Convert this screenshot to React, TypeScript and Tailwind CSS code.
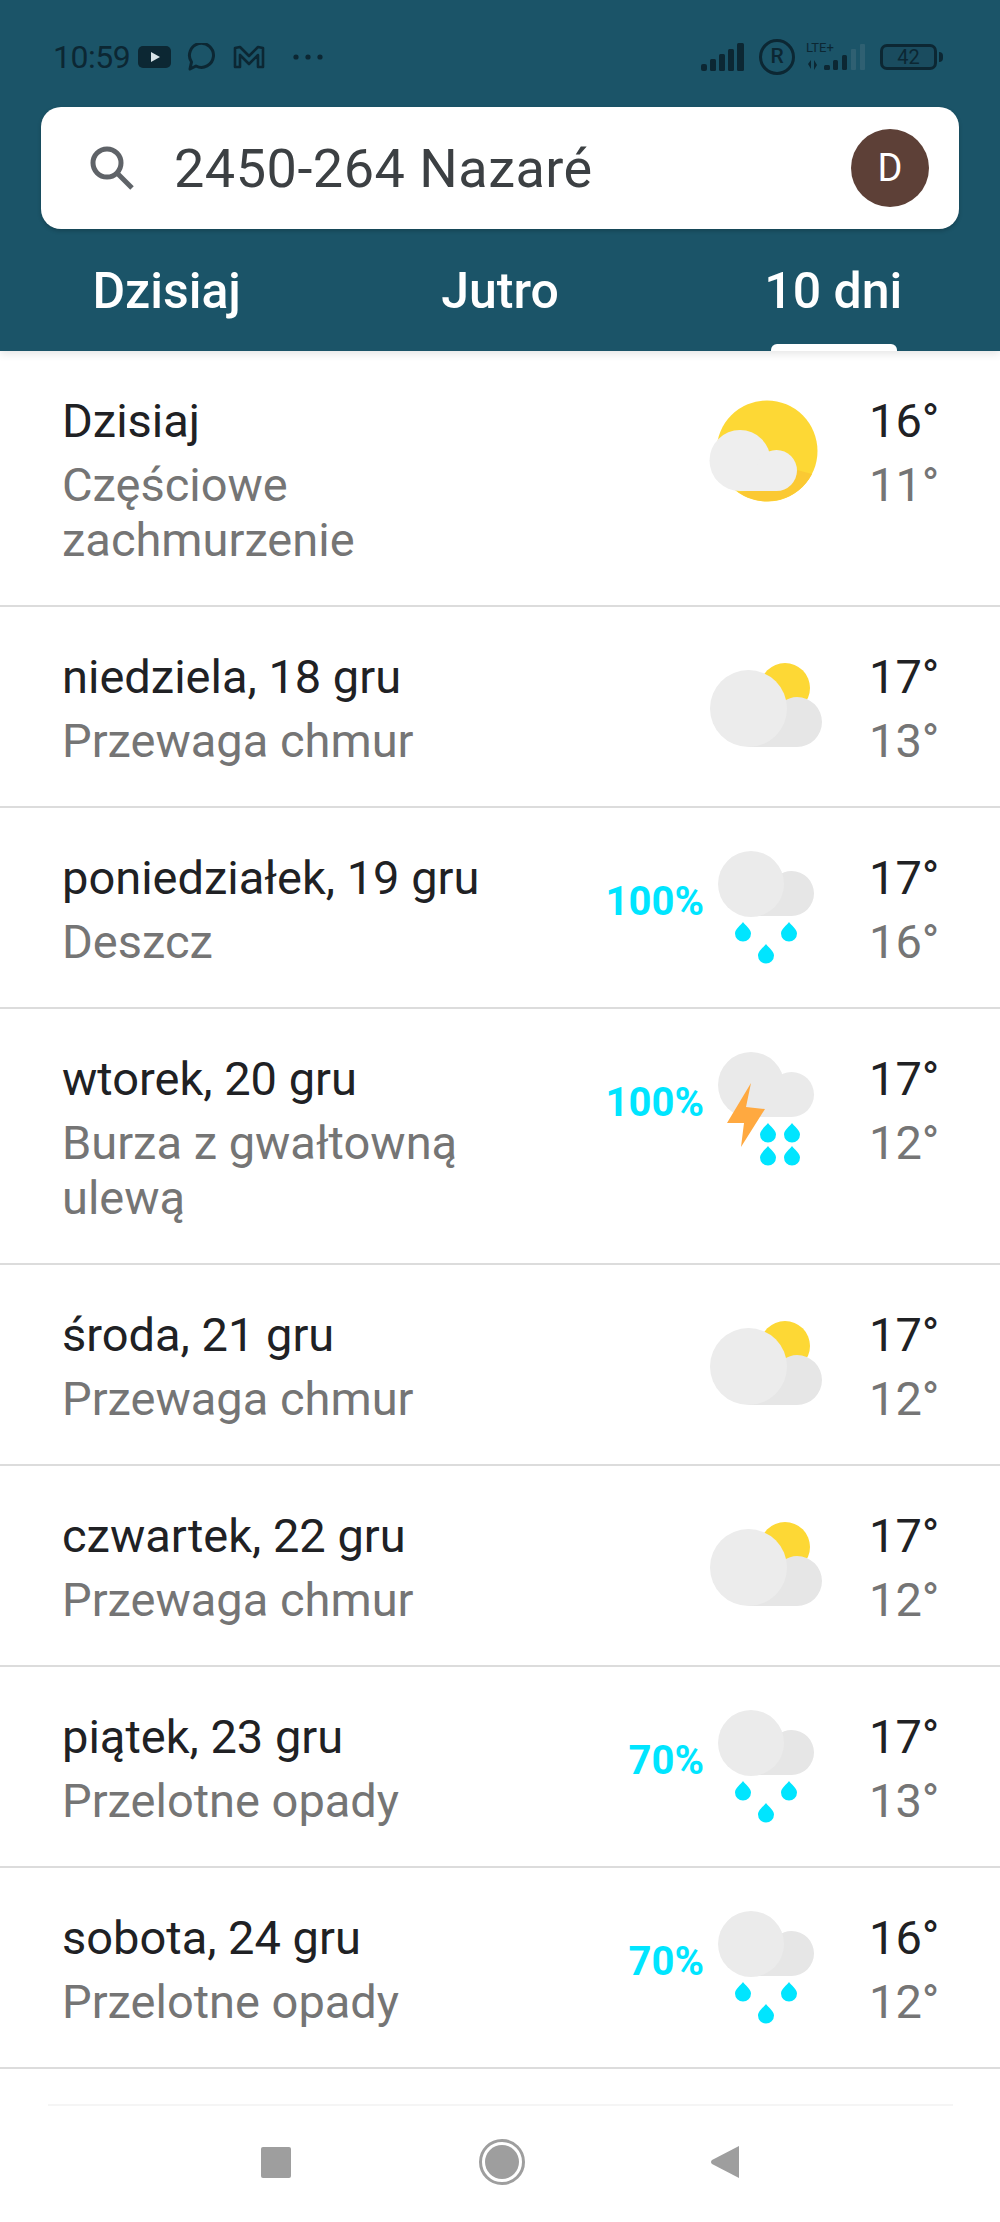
import React from "react";

const DROP = "M0 -9 C2 -6 8 -2 8 2.5 A8 8 0 0 1 -8 2.5 C-8 -2 -2 -6 0 -9 Z";
const Drop = ({ x, y }: { x: number; y: number }) => <path d={DROP} transform={`translate(${x} ${y})`} fill="#00E5FF" />;

function Icon({ type }: { type: "partly" | "mostly" | "rain" | "storm" }) {
  return (
    <svg width="130" height="122" viewBox="0 0 130 122" className="shrink-0">
      {type === "partly" && (
        <>
          <circle cx="67" cy="65" r="50.5" fill="#FDD835" />
          <path d="M48 105 L97 84 L112 88 A50.5 50.5 0 0 1 38 106 Z" fill="#FBC933" />
          <g fill="#EEEEEE">
            <circle cx="40" cy="74.5" r="30.5" />
            <circle cx="76.5" cy="84.5" r="20.5" />
            <rect x="40" y="80" width="37" height="25" />
          </g>
        </>
      )}
      {type === "mostly" && (
        <>
          <circle cx="85" cy="46" r="25" fill="#FDD835" />
          <path d="M48 105 L97 105 A25 25 0 0 0 97 55 A25 25 0 0 0 75 70 Z" fill="#E6E6E6" />
          <circle cx="48.5" cy="66.5" r="38.5" fill="#ECECEC" />
        </>
      )}
      {type === "rain" && (
        <>
          <path d="M51 73 L91.5 73 A22.5 22.5 0 0 0 91.5 28 A22.5 22.5 0 0 0 70 45 Z" fill="#E6E6E6" />
          <circle cx="51" cy="41" r="33" fill="#EBEBEB" />
          <Drop x={43} y={88} />
          <Drop x={89} y={88} />
          <Drop x={66} y={110} />
        </>
      )}
      {type === "storm" && (
        <>
          <g fill="#EAEAEA">
            <circle cx="51" cy="41" r="33" />
            <circle cx="91.5" cy="50.5" r="22.5" />
            <rect x="51" y="45" width="41" height="28" />
          </g>
          <polygon points="51,39 46,63 65,65 41,103 44,79 27,79" fill="#FFA940" />
          <Drop x={68} y={88} />
          <Drop x={92} y={88} />
          <Drop x={68} y={111} />
          <Drop x={92} y={111} />
        </>
      )}
    </svg>
  );
}

type Day = {
  name: string;
  sub: React.ReactNode;
  pct?: string;
  icon: "partly" | "mostly" | "rain" | "storm";
  hi: string;
  lo: string;
};

const days: Day[] = [
  { name: "Dzisiaj", sub: "Częściowe zachmurzenie", icon: "partly", hi: "16°", lo: "11°" },
  { name: "niedziela, 18 gru", sub: "Przewaga chmur", icon: "mostly", hi: "17°", lo: "13°" },
  { name: "poniedziałek, 19 gru", sub: "Deszcz", pct: "100%", icon: "rain", hi: "17°", lo: "16°" },
  { name: "wtorek, 20 gru", sub: "Burza z gwałtowną ulewą", pct: "100%", icon: "storm", hi: "17°", lo: "12°" },
  { name: "środa, 21 gru", sub: "Przewaga chmur", icon: "mostly", hi: "17°", lo: "12°" },
  { name: "czwartek, 22 gru", sub: "Przewaga chmur", icon: "mostly", hi: "17°", lo: "12°" },
  { name: "piątek, 23 gru", sub: "Przelotne opady", pct: "70%", icon: "rain", hi: "17°", lo: "13°" },
  { name: "sobota, 24 gru", sub: "Przelotne opady", pct: "70%", icon: "rain", hi: "16°", lo: "12°" },
];

function StatusBar() {
  return (
    <div className="flex h-[107px] items-center justify-between pl-[53px] pr-[57px] pt-[6px] text-[#0c2733]">
      <div className="flex items-center">
        <span className="text-[32px] leading-none tracking-[-0.5px]">10:59</span>
        <svg width="34" height="22" viewBox="0 0 34 22" className="ml-[8px]">
          <rect width="33" height="22" rx="5" fill="#0c2733" />
          <polygon points="13,6 22,11 13,16" fill="#d7e3e8" />
        </svg>
        <svg width="30" height="28" viewBox="0 0 30 28" fill="none" className="ml-[15px]">
          <path d="M3 26 L4.5 19 A12 12 0 1 1 9 23 Z" stroke="#0c2733" strokeWidth="3" strokeLinejoin="round" />
        </svg>
        <svg width="32" height="24" viewBox="0 0 32 24" fill="none" className="ml-[16px]">
          <path d="M2 22 V3 L7 2 L16 11 L25 2 L30 3 V22 H25 V10 L16 19 L7 10 V22 Z" stroke="#0c2733" strokeWidth="2.6" strokeLinejoin="round" />
        </svg>
        <svg width="30" height="6" viewBox="0 0 30 6" className="ml-[28px]">
          <circle cx="3" cy="3" r="2.6" fill="#0c2733" />
          <circle cx="15" cy="3" r="2.6" fill="#0c2733" />
          <circle cx="27" cy="3" r="2.6" fill="#0c2733" />
        </svg>
      </div>
      <div className="flex items-center">
        <svg width="44" height="28" viewBox="0 0 44 28">
          <rect x="0" y="21" width="6" height="7" rx="2" fill="#0c2733" />
          <rect x="9" y="16" width="6" height="12" rx="1.5" fill="#0c2733" />
          <rect x="18" y="11" width="6" height="17" rx="1.5" fill="#0c2733" />
          <rect x="27" y="6" width="6" height="22" rx="1.5" fill="#0c2733" />
          <rect x="36" y="0" width="7" height="28" rx="1.5" fill="#0c2733" />
        </svg>
        <div className="ml-[14px] flex h-[36px] w-[36px] shrink-0 items-center justify-center rounded-full border-[3px] border-[#0c2733] text-[21px] font-medium leading-none">R</div>
        <div className="relative ml-[11px] h-[30px] w-[63px]">
          <span className="absolute left-0 top-[-1px] text-[13px] leading-none">LTE+</span>
          <svg width="63" height="30" viewBox="0 0 63 30" className="absolute left-0 top-0">
            <path d="M2 22 L5 18 V27 Z M8 28 V18 L11 23 Z" fill="#0c2733" />
            <rect x="18" y="23" width="6" height="5" rx="1.5" fill="#0c2733" />
            <rect x="27" y="18" width="5" height="10" rx="1.5" fill="#0c2733" />
            <rect x="36" y="13" width="5" height="15" rx="1.5" fill="#0c2733" />
            <rect x="45" y="7" width="5" height="21" rx="1" fill="#2f6072" />
            <rect x="54" y="2" width="5" height="26" rx="1" fill="#2f6072" />
          </svg>
        </div>
        <div className="ml-[11px] flex h-[26px] w-[57px] items-center justify-center rounded-[7px] border-[3px] border-[#0c2733] bg-[#1a4c5f] text-[20px] leading-none">42</div>
        <div className="ml-[2px] h-[10px] w-[4px] rounded-r-sm bg-[#0c2733]" />
      </div>
    </div>
  );
}

export default function App() {
  return (
    <div className="flex h-[2222px] w-[1000px] flex-col overflow-hidden bg-white font-['Roboto',sans-serif]">
      <header className="relative z-10 h-[351px] shrink-0 bg-[#1b5468] shadow-[0_3px_8px_rgba(0,0,0,0.1)]">
        <StatusBar />
        <div className="mx-[41px] flex h-[122px] items-center rounded-[20px] bg-white pl-[48px] pr-[30px] shadow-[0_2px_4px_rgba(0,0,0,0.2)]">
          <svg width="46" height="46" viewBox="0 0 46 46" fill="none" className="shrink-0">
            <circle cx="18" cy="18" r="14" stroke="#5f6368" strokeWidth="5" />
            <path d="M28 28 L43 43" stroke="#5f6368" strokeWidth="5" />
          </svg>
          <span className="ml-[39px] flex-1 pt-[2px] text-[54px] leading-none tracking-[0.5px] text-[#3c4043]">2450-264 Nazaré</span>
          <div className="flex h-[78px] w-[78px] items-center justify-center rounded-full bg-[#5d4037] text-[38px] text-white">D</div>
        </div>
        <nav className="grid h-[122px] grid-cols-3 pt-[2px] text-center text-[50px] font-medium text-white">
          <div className="relative flex items-center justify-center">Dzisiaj</div>
          <div className="relative flex items-center justify-center">Jutro</div>
          <div className="relative flex items-center justify-center">
            10 dni
            <span className="absolute bottom-0 left-[104px] h-[7px] w-[126px] rounded-t-[6px] bg-white" />
          </div>
        </nav>
      </header>

      <main className="flex-1">
        {days.map((d) => (
          <div key={d.name} className="flex border-b-2 border-[#dcdcdc] pb-[38px] pl-[62px] pr-[62px]">
            <div className="min-w-0 flex-1 pt-[42px]">
              <div className="text-[47px] leading-[56px] text-[#202124]">{d.name}</div>
              <div className="mt-[8px] max-w-[470px] text-[47px] leading-[55px] text-[#757575]">{d.sub}</div>
            </div>
            {d.pct && <div className="-mr-[4px] pt-[66px] text-[40px] font-bold leading-[56px] text-[#00e5ff]">{d.pct}</div>}
            <div className="pt-[35px]">
              <Icon type={d.icon} />
            </div>
            <div className="ml-[39px] w-[69px] pt-[42px] text-[47px]">
              <div className="leading-[56px] text-[#202124]">{d.hi}</div>
              <div className="mt-[8px] leading-[55px] text-[#757575]">{d.lo}</div>
            </div>
          </div>
        ))}
      </main>

      <footer className="h-[155px] shrink-0 pt-[35px]">
        <div className="ml-[48px] mr-[47px] h-[2px] bg-[#f5f5f5]" />
        <div className="relative mt-[33px] flex items-center justify-center">
          <div className="flex items-center gap-[188px]">
            <div className="h-[31px] w-[30px] rounded-[2px] bg-[#9e9e9e]" />
            <div className="flex h-[46px] w-[46px] items-center justify-center rounded-full border-[3px] border-[#9e9e9e]">
              <div className="h-[34px] w-[34px] rounded-full bg-[#9e9e9e]" />
            </div>
            <svg width="30" height="34" viewBox="0 0 30 34" className="-ml-[3px]">
              <path d="M29 1 V33 L2 19 Q0 17 2 15 Z" fill="#9e9e9e" />
            </svg>
          </div>
        </div>
      </footer>
    </div>
  );
}
